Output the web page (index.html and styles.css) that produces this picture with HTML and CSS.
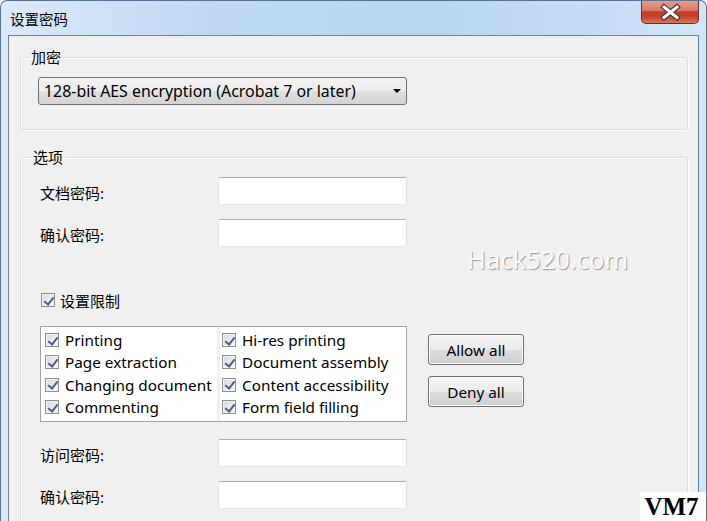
FILE: index.html
```html
<!DOCTYPE html>
<html lang="zh-CN">
<head>
    <meta charset="UTF-8" />
    <title>设置密码</title>
    <link rel="stylesheet" href="styles.css">
</head>
<body>
    <div class="window">
        <div class="titlebar">
            <span class="title">设置密码</span>
            <button class="close-btn" aria-label="关闭">
                <svg width="58" height="24" viewBox="0 0 58 24">
                    <path d="M23 8 L36 18.5 M36 8 L23 18.5" stroke="#3c3c3c" stroke-width="5.4" stroke-linecap="square" fill="none"/>
                    <path d="M23 8 L36 18.5 M36 8 L23 18.5" stroke="#ffffff" stroke-width="3" stroke-linecap="square" fill="none"/>
                </svg>
            </button>
        </div>
        <div class="client">
            <fieldset class="group group-enc">
                <legend>加密</legend>
                <div class="select">
                    <span>128-bit AES encryption (Acrobat 7 or later)</span>
                    <span class="arrow"></span>
                </div>
            </fieldset>

            <fieldset class="group group-opt">
                <legend>选项</legend>
                <div class="field-row">
                    <label>文档密码:</label>
                    <input type="password">
                </div>
                <div class="field-row">
                    <label>确认密码:</label>
                    <input type="password">
                </div>

                <div class="check-row">
                    <span class="cb"></span>
                    <span>设置限制</span>
                </div>

                <div class="perm-area">
                    <div class="perm-list">
                        <div class="perm-col left">
                            <div class="perm-item"><span class="cb"></span>Printing</div>
                            <div class="perm-item"><span class="cb"></span>Page extraction</div>
                            <div class="perm-item"><span class="cb"></span>Changing document</div>
                            <div class="perm-item"><span class="cb"></span>Commenting</div>
                        </div>
                        <div class="perm-col right">
                            <div class="perm-item"><span class="cb"></span>Hi-res printing</div>
                            <div class="perm-item"><span class="cb"></span>Document assembly</div>
                            <div class="perm-item"><span class="cb"></span>Content accessibility</div>
                            <div class="perm-item"><span class="cb"></span>Form field filling</div>
                        </div>
                    </div>
                    <div class="perm-buttons">
                        <button class="btn">Allow all</button>
                        <button class="btn">Deny all</button>
                    </div>
                </div>

                <div class="field-row after-perm">
                    <label>访问密码:</label>
                    <input type="password">
                </div>
                <div class="field-row">
                    <label>确认密码:</label>
                    <input type="password">
                </div>
            </fieldset>

            <div class="watermark">Hack520.com</div>
        </div>
        <div class="badge">VM7</div>
    </div>
</body>
</html>
```

FILE: styles.css
```css
* {
    box-sizing: border-box;
}
body {
    margin: 0;
    font-family: "Noto Sans", "Noto Sans CJK SC", sans-serif;
    font-size: 15px;
    color: #000;
    background: #fff;
}
.window {
    position: relative;
    width: 707px;
    height: 521px;
    overflow: hidden;
    padding: 0 7px;
    border: 1px solid #5a7190;
    border-bottom: none;
    border-radius: 7px 7px 0 0;
    background: linear-gradient(to right, #dce9f8 0%, #bfd9f5 30%, #b8d5f4 60%, #c6ddf7 85%, #d3e6f9 100%);
}
.titlebar {
    display: flex;
    align-items: flex-start;
    height: 34px;
}
.title {
    padding: 9px 0 0 2px;
    font-size: 14.5px;
    line-height: 18px;
    color: #000;
}
.close-btn {
    margin-left: auto;
    margin-top: -1px;
    width: 58px;
    height: 24px;
    padding: 0;
    border: 1px solid #6a2c24;
    border-top: none;
    border-radius: 0 0 5px 5px;
    background: linear-gradient(#e8a190 0%, #d87a66 45%, #c13b25 52%, #c6452e 75%, #d97a5e 100%);
}
.close-btn svg {
    display: block;
    margin: -1px 0 0 -1px;
}
.client {
    position: relative;
    height: 487px;
    padding: 0 10px 0 11px;
    border: 1px solid #6f8095;
    border-bottom: none;
    background: #f0f0f0;
}
.group {
    margin: 11px 0 0;
    min-width: 0;
    border: 1px solid #d5dfe5;
    border-radius: 3px;
    box-shadow: inset 1px 1px 0 #fff, 1px 1px 0 #fff;
}
.group legend {
    padding: 0 2px;
    margin-left: -9px;
    line-height: 20px;
}
.group-enc {
    padding: 10px 17px 24px;
}
.group-opt {
    margin-top: 17px;
    padding: 10px 19px 40px;
}
.select {
    display: flex;
    align-items: center;
    width: 369px;
    height: 28px;
    padding-left: 5px;
    border: 1px solid #707070;
    border-radius: 3px;
    background: linear-gradient(#f3f3f3 0%, #ececec 50%, #e0e0e0 52%, #d3d3d3 100%);
    font-size: 15.9px;
    white-space: nowrap;
}
.arrow {
    margin-left: auto;
    margin-right: 5px;
    width: 0;
    height: 0;
    border-left: 4px solid transparent;
    border-right: 4px solid transparent;
    border-top: 4px solid #000;
}
.field-row {
    display: flex;
    align-items: center;
    height: 28px;
}
.field-row + .field-row {
    margin-top: 14px;
}
.field-row label {
    width: 178px;
    padding-top: 3px;
}
.field-row input {
    width: 189px;
    height: 28px;
    border: 1px solid;
    border-color: #abadb3 #dbdfe6 #e3e9ef #e2e3ea;
    border-radius: 2px;
    background: #fff;
}
.check-row {
    display: flex;
    align-items: center;
    gap: 5px;
    height: 20px;
    margin-top: 43px;
    padding-left: 1px;
}
.cb {
    position: relative;
    flex: none;
    width: 14px;
    height: 14px;
    border: 1px solid #8e8f8f;
    background: linear-gradient(135deg, #d8d8d8, #fbfbfb);
    box-shadow: inset 0 0 0 1px #f4f4f4;
}
.cb::after {
    content: "";
    position: absolute;
    left: 3.5px;
    top: 0.5px;
    width: 4px;
    height: 8px;
    border-right: 2px solid #4a5f8c;
    border-bottom: 2px solid #4a5f8c;
    transform: rotate(38deg);
}
.perm-area {
    display: flex;
    align-items: flex-start;
    gap: 21px;
    margin-top: 16px;
}
.perm-list {
    display: flex;
    width: 367px;
    height: 96px;
    border: 1px solid #a3a3a3;
    background: #fff;
}
.perm-col {
    padding-top: 2px;
}
.perm-col.left {
    width: 179px;
    padding-left: 4px;
    border-right: 3px solid #f0f0f0;
}
.perm-col.right {
    padding-left: 2px;
}
.perm-item {
    display: flex;
    align-items: center;
    gap: 6px;
    height: 22.3px;
    font-size: 15.3px;
    white-space: nowrap;
}
.perm-buttons {
    display: flex;
    flex-direction: column;
    gap: 11px;
    padding-top: 8px;
}
.btn {
    width: 96px;
    height: 31px;
    padding: 0;
    font-family: inherit;
    font-size: 15.3px;
    color: #000;
    border: 1px solid #707070;
    border-radius: 3px;
    background: linear-gradient(#f2f2f2 0%, #ebebeb 50%, #dddddd 52%, #cfcfcf 100%);
    box-shadow: inset 0 0 0 1px #fcfcfc;
}
.field-row.after-perm {
    margin-top: 17px;
}
.watermark {
    position: absolute;
    left: 458px;
    top: 208px;
    font-size: 25.5px;
    line-height: 30px;
    color: #fafafa;
    text-shadow: 1px 1px 1px #9a9a9a;
}
.badge {
    position: absolute;
    right: 0;
    bottom: 0;
    width: 66px;
    height: 29px;
    padding-right: 3px;
    background: #fff;
    font-family: "Liberation Serif", serif;
    font-weight: bold;
    font-size: 25px;
    line-height: 29px;
    text-align: center;
    color: #000;
}
```
